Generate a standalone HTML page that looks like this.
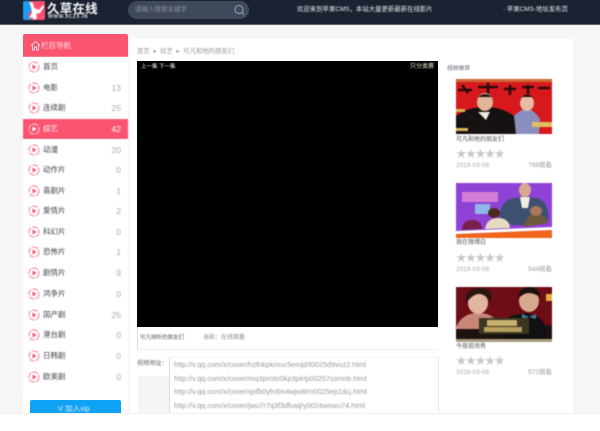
<!DOCTYPE html>
<html lang="zh">
<head>
<meta charset="utf-8">
<style>
html,body{margin:0;padding:0;background:#f6f6f6}
body{width:600px;height:431px;overflow:hidden;position:relative;font-family:"Liberation Sans","Noto Sans CJK SC",sans-serif}
div,span{position:absolute;white-space:nowrap}
svg{position:absolute;display:block}
.t{filter:blur(.4px)}
.p{filter:blur(.5px)}
.r{left:23px;width:105px;height:20px;background:#fff;color:#444;font-size:7.5px;line-height:20px}
.r .n{left:20px;top:0}
.r .c{right:7px;top:0;color:#aaa;font-size:8.5px}
.r svg{left:4px;top:3px}
.on{background:#fb5470;color:#fff}
.on .c{color:#fff}
.u{left:174px;font-size:7.25px;color:#999;line-height:10px}
.side{font-size:7px;color:#555}
.date{left:456px;font-size:6.5px;color:#aaa}
.view{left:520px;width:32px;text-align:right;font-size:6.5px;color:#999}
.st{left:456px;color:#c8c8c8;font-size:10.5px;letter-spacing:-.9px;line-height:12px}
</style>
</head>
<body>
<!-- header -->
<div style="left:0;top:0;width:600px;height:24px;background:#1b2332;border-bottom:1px solid #5d6470"></div>
<svg class="p" style="left:23px;top:1px" width="22" height="19" viewBox="0 0 22 19">
<rect width="22" height="19" rx="2" fill="#fb4f73"/>
<path d="M0 2a2 2 0 0 1 2-2h5L9 8 5 14l3 5H2a2 2 0 0 1-2-2z" fill="#1d9bf0"/>
<path d="M6 1l4 1 1 5 5 2 4-5 1 2-4 6-4 1 1 4-3 2-2-3-3 1 3-5-1-6z" fill="#fff"/>
</svg>
<div class="t" style="left:47px;top:3px;font-size:12.5px;line-height:13px;font-weight:bold;color:#f2f2f2;letter-spacing:.2px">久草在线</div>
<div class="t" style="left:48px;top:14px;font-size:5px;line-height:6px;font-weight:bold;color:#ddd;letter-spacing:.5px">WWW.9CZX.IN</div>
<div style="left:128px;top:1px;width:121px;height:18px;border-radius:9px;background:#40495a"></div>
<div class="t" style="left:135px;top:5px;font-size:6.5px;line-height:10px;color:#8b929e">请输入搜索关键字</div>
<svg style="left:232px;top:3px" width="15" height="14" viewBox="0 0 15 14"><circle cx="7" cy="6.5" r="4" fill="none" stroke="#7f93a8" stroke-width="1.2"/><path d="M10 9.5l2.5 2.5" stroke="#7f93a8" stroke-width="1.2"/></svg>
<div class="t" style="left:297px;top:5px;font-size:6.4px;line-height:10px;color:#e8e8e8">欢迎来到苹果CMS，本站大量更新最新在线影片</div>
<div class="t" style="left:503px;top:5px;font-size:6.4px;line-height:10px;color:#e8e8e8">· 苹果CMS-地址发布页</div>

<!-- left panel -->
<div style="left:23px;top:34px;width:105px;height:380px;background:#fff"></div>
<div style="left:23px;top:34px;width:105px;height:23px;background:#fb5470;border-radius:2px 2px 0 0"></div>
<svg style="left:30px;top:40px" width="11" height="11" viewBox="0 0 11 11"><path d="M1 5.5L5.5 1.5 10 5.5M2.5 4.5V10h2V7h2v3h2V4.5" fill="none" stroke="#ffd5dc" stroke-width=".9"/></svg>
<div class="t" style="left:41px;top:40px;font-size:7.5px;line-height:11px;color:#ffe3e8">栏目导航</div>

<div class="r t" style="top:57px"><svg width="14" height="14" viewBox="0 0 14 14"><circle cx="7" cy="7" r="5" fill="none" stroke="#fb7a90" stroke-width="1" stroke-dasharray="6 1.2"/><path d="M5.5 4.5v5l4-2.5z" fill="#fb5470"/></svg><span class="n">首页</span></div>
<div class="r t" style="top:77.5px"><svg width="14" height="14" viewBox="0 0 14 14"><circle cx="7" cy="7" r="5" fill="none" stroke="#fb7a90" stroke-width="1" stroke-dasharray="6 1.2"/><path d="M5.5 4.5v5l4-2.5z" fill="#fb5470"/></svg><span class="n">电影</span><span class="c">13</span></div>
<div class="r t" style="top:98px"><svg width="14" height="14" viewBox="0 0 14 14"><circle cx="7" cy="7" r="5" fill="none" stroke="#fb7a90" stroke-width="1" stroke-dasharray="6 1.2"/><path d="M5.5 4.5v5l4-2.5z" fill="#fb5470"/></svg><span class="n">连续剧</span><span class="c">25</span></div>
<div class="r t on" style="top:119px"><svg width="14" height="14" viewBox="0 0 14 14"><circle cx="7" cy="7" r="5" fill="none" stroke="#ffd5dc" stroke-width="1" stroke-dasharray="6 1.2"/><path d="M5.5 4.5v5l4-2.5z" fill="#fff"/></svg><span class="n">综艺</span><span class="c">42</span></div>
<div class="r t" style="top:139.5px"><svg width="14" height="14" viewBox="0 0 14 14"><circle cx="7" cy="7" r="5" fill="none" stroke="#fb7a90" stroke-width="1" stroke-dasharray="6 1.2"/><path d="M5.5 4.5v5l4-2.5z" fill="#fb5470"/></svg><span class="n">动漫</span><span class="c">20</span></div>
<div class="r t" style="top:160px"><svg width="14" height="14" viewBox="0 0 14 14"><circle cx="7" cy="7" r="5" fill="none" stroke="#fb7a90" stroke-width="1" stroke-dasharray="6 1.2"/><path d="M5.5 4.5v5l4-2.5z" fill="#fb5470"/></svg><span class="n">动作片</span><span class="c">0</span></div>
<div class="r t" style="top:180.5px"><svg width="14" height="14" viewBox="0 0 14 14"><circle cx="7" cy="7" r="5" fill="none" stroke="#fb7a90" stroke-width="1" stroke-dasharray="6 1.2"/><path d="M5.5 4.5v5l4-2.5z" fill="#fb5470"/></svg><span class="n">喜剧片</span><span class="c">1</span></div>
<div class="r t" style="top:201px"><svg width="14" height="14" viewBox="0 0 14 14"><circle cx="7" cy="7" r="5" fill="none" stroke="#fb7a90" stroke-width="1" stroke-dasharray="6 1.2"/><path d="M5.5 4.5v5l4-2.5z" fill="#fb5470"/></svg><span class="n">爱情片</span><span class="c">2</span></div>
<div class="r t" style="top:221.5px"><svg width="14" height="14" viewBox="0 0 14 14"><circle cx="7" cy="7" r="5" fill="none" stroke="#fb7a90" stroke-width="1" stroke-dasharray="6 1.2"/><path d="M5.5 4.5v5l4-2.5z" fill="#fb5470"/></svg><span class="n">科幻片</span><span class="c">0</span></div>
<div class="r t" style="top:242px"><svg width="14" height="14" viewBox="0 0 14 14"><circle cx="7" cy="7" r="5" fill="none" stroke="#fb7a90" stroke-width="1" stroke-dasharray="6 1.2"/><path d="M5.5 4.5v5l4-2.5z" fill="#fb5470"/></svg><span class="n">恐怖片</span><span class="c">1</span></div>
<div class="r t" style="top:263px"><svg width="14" height="14" viewBox="0 0 14 14"><circle cx="7" cy="7" r="5" fill="none" stroke="#fb7a90" stroke-width="1" stroke-dasharray="6 1.2"/><path d="M5.5 4.5v5l4-2.5z" fill="#fb5470"/></svg><span class="n">剧情片</span><span class="c">9</span></div>
<div class="r t" style="top:284px"><svg width="14" height="14" viewBox="0 0 14 14"><circle cx="7" cy="7" r="5" fill="none" stroke="#fb7a90" stroke-width="1" stroke-dasharray="6 1.2"/><path d="M5.5 4.5v5l4-2.5z" fill="#fb5470"/></svg><span class="n">鸿争片</span><span class="c">0</span></div>
<div class="r t" style="top:304.5px"><svg width="14" height="14" viewBox="0 0 14 14"><circle cx="7" cy="7" r="5" fill="none" stroke="#fb7a90" stroke-width="1" stroke-dasharray="6 1.2"/><path d="M5.5 4.5v5l4-2.5z" fill="#fb5470"/></svg><span class="n">国产剧</span><span class="c">25</span></div>
<div class="r t" style="top:325px"><svg width="14" height="14" viewBox="0 0 14 14"><circle cx="7" cy="7" r="5" fill="none" stroke="#fb7a90" stroke-width="1" stroke-dasharray="6 1.2"/><path d="M5.5 4.5v5l4-2.5z" fill="#fb5470"/></svg><span class="n">港台剧</span><span class="c">0</span></div>
<div class="r t" style="top:346px"><svg width="14" height="14" viewBox="0 0 14 14"><circle cx="7" cy="7" r="5" fill="none" stroke="#fb7a90" stroke-width="1" stroke-dasharray="6 1.2"/><path d="M5.5 4.5v5l4-2.5z" fill="#fb5470"/></svg><span class="n">日韩剧</span><span class="c">0</span></div>
<div class="r t" style="top:366.5px"><svg width="14" height="14" viewBox="0 0 14 14"><circle cx="7" cy="7" r="5" fill="none" stroke="#fb7a90" stroke-width="1" stroke-dasharray="6 1.2"/><path d="M5.5 4.5v5l4-2.5z" fill="#fb5470"/></svg><span class="n">欧美剧</span><span class="c">0</span></div>

<div style="left:30px;top:400px;width:91px;height:14px;background:#10a2f5;border-radius:2px 2px 0 0"></div>
<div class="t" style="left:58px;top:403px;font-size:7.5px;line-height:11px;color:#dff3ff">V 加入vip</div>

<!-- main panel -->
<div style="left:130px;top:39px;width:443px;height:374px;background:#fff"></div>
<div class="t" style="left:137px;top:47px;font-size:6.4px;line-height:10px;color:#999">首页 &nbsp;▸&nbsp; 综艺 &nbsp;▸&nbsp; 可凡和他的朋友们</div>
<div style="left:137px;top:61px;width:301px;height:266px;background:#000"></div>
<div class="t" style="left:141px;top:63px;font-size:5.5px;line-height:8px;color:#eee">上一集 下一集</div>
<div class="t" style="left:410px;top:63px;font-size:6px;line-height:8px;color:#e8e2c8">只分类赛</div>
<div style="left:137px;top:327px;width:1px;height:22px;background:#ddd"></div>
<div style="left:137px;top:349px;width:301px;height:1px;background:#f0f0f0"></div>
<div class="t" style="left:140px;top:334px;font-size:5.5px;line-height:9px;color:#556">可凡倾听的朋友们</div>
<div class="t" style="left:203px;top:334px;font-size:6px;line-height:9px;color:#888">当前：在线观看</div>
<div class="t" style="left:137px;top:359px;font-size:6.2px;line-height:10px;color:#666">视频地址：</div>
<div style="left:138px;top:376px;width:31px;height:37px;background:#f5f5f5"></div>
<div style="left:169px;top:357px;width:268px;height:56px;border-left:1px solid #ddd;border-right:1px solid #e8e8e8;border-top:1px solid #f4f4f4"></div>
<div class="u t" style="top:360px">http://v.qq.com/x/cover/hzfnkpkmuc5emjd/t0025d9vuz2.html</div>
<div class="u t" style="top:373.5px">http://v.qq.com/x/cover/mq3pmitx0kp3plr/p00257ssmnb.html</div>
<div class="u t" style="top:387px">http://v.qq.com/x/cover/qxfb0yfntlm4wjw8/m0025ep1dcj.html</div>
<div class="u t" style="top:401px">http://v.qq.com/x/cover/jwu7r7q3f3dfvaij/y0024wowu74.html</div>

<!-- side -->
<div class="t side" style="left:447px;top:65px;color:#667;font-size:5.8px;line-height:9px">视频推荐</div>

<svg class="p" style="left:456px;top:78.5px" width="96" height="55" viewBox="0 0 96 55">
<rect width="96" height="55" fill="#d7191e"/>
<rect y="0" width="96" height="3" fill="#c9a04a" opacity=".6"/>
<path d="M2 11h14M6 6l6 8M22 8h20M32 4v12M48 10h12M54 6v10M66 8h12M72 6v9M82 9h12" stroke="#2a0a0a" stroke-width="2.6"/>
<path d="M0 55V37q12-9 29-9t29 9l8 18z" fill="#161212"/>
<ellipse cx="29" cy="23" rx="8" ry="9" fill="#e3b59a"/>
<path d="M20 20q9-10 18 0l-2-2h-14z" fill="#1a1413"/>
<path d="M22 33h12l-4 8z" fill="#f0e8dc"/>
<path d="M60 55l-2-18q8-8 14-7t12 10l-1 15z" fill="#8b8fc0"/>
<ellipse cx="71" cy="24" rx="7" ry="8" fill="#e7bba4"/>
<path d="M62 24q9-17 19 0l-4-6h-11z" fill="#1d1412"/>
<path d="M76 43h20v5h-20z" fill="#e0c060"/>
<path d="M0 30h9v3h-9zM0 49h12v3H0z" fill="#d8b75a"/>
</svg>
<div class="t side" style="left:456px;top:136px;line-height:9px;font-size:6px">可凡和他的朋友们</div>
<div class="st t" style="top:148px">★★★★★</div>
<div class="t date" style="top:162px;line-height:8px">2018-03-08</div>
<div class="t view" style="top:162px;line-height:8px">798观看</div>

<svg class="p" style="left:456px;top:182.5px" width="96" height="55" viewBox="0 0 96 55">
<rect width="96" height="55" fill="#8f42d6"/>
<path d="M0 51L96 47V55H0z" fill="#f0641e"/>
<path d="M0 48L96 44V47L0 51z" fill="#fff"/>
<path d="M6 9h36v10H6z" fill="#d27cd8"/>
<path d="M19 21h15v10H19z" fill="#8fb8e8"/>
<path d="M44 36q-1-15 10-20l16-3 14 3q8 5 9 20l-14 6H56z" fill="#3d5070"/>
<ellipse cx="69" cy="7" rx="6" ry="7" fill="#d8a98c"/>
<path d="M64 14h10l-2 11h-6z" fill="#f0ece4"/>
<path d="M6 47q0-10 10-10t10 9z" fill="#7a2050"/>
<path d="M29 46q2-11 13-11t12 10z" fill="#e8dcc0"/>
<ellipse cx="38" cy="30" rx="6" ry="5" fill="#4a2a1c"/>
<path d="M68 44q2-14 12-13t12 9z" fill="#6e5a3c"/>
<ellipse cx="80" cy="28" rx="6" ry="5" fill="#a87858"/>
</svg>
<div class="t side" style="left:456px;top:239px;line-height:9px;font-size:6px">我在微博白</div>
<div class="st t" style="top:252px">★★★★★</div>
<div class="t date" style="top:266px;line-height:8px">2018-03-08</div>
<div class="t view" style="top:266px;line-height:8px">544观看</div>

<svg class="p" style="left:456px;top:286.5px" width="96" height="55" viewBox="0 0 96 55">
<rect width="96" height="54" fill="#6e0d16"/>
<rect y="38" width="96" height="14" fill="#1e1210"/>
<rect y="52" width="96" height="3" fill="#a89c80"/>
<path d="M0 40q6-13 20-14t22 9l4 7H0z" fill="#c98877"/>
<ellipse cx="22" cy="16" rx="10" ry="11" fill="#e3b6a0"/>
<path d="M10 16q-2-14 13-15t12 14q-6-8-12-8t-13 9z" fill="#2c1410"/>
<path d="M46 52q-2-20 12-24l12-2 12 4q10 6 8 22z" fill="#111"/>
<ellipse cx="73" cy="14" rx="10" ry="11" fill="#d8a88c"/>
<path d="M62 12q1-12 11-12t12 11q-6-5-12-5t-11 6z" fill="#1a1010"/>
<path d="M66 27l7 3 7-3v5l-7-2-7 2z" fill="#3e7e98"/>
<rect x="23" y="31" width="50" height="16" fill="#3a3620"/>
<rect x="31" y="33" width="30" height="6" fill="#c8b070"/>
<rect x="28" y="40" width="38" height="5" fill="#b8a060"/>
<rect x="90" y="7" width="6" height="7" fill="#e2b23a"/>
</svg>
<div class="t side" style="left:456px;top:343px;line-height:9px;font-size:6px">今夜现场秀</div>
<div class="st t" style="top:355px">★★★★★</div>
<div class="t date" style="top:369px;line-height:8px">2018-03-08</div>
<div class="t view" style="top:369px;line-height:8px">572观看</div>

<!-- bottom white band -->
<div style="left:0;top:413px;width:600px;height:18px;background:#fff;border-top:1px solid #f0f0f0;box-sizing:border-box"></div>
</body>
</html>
